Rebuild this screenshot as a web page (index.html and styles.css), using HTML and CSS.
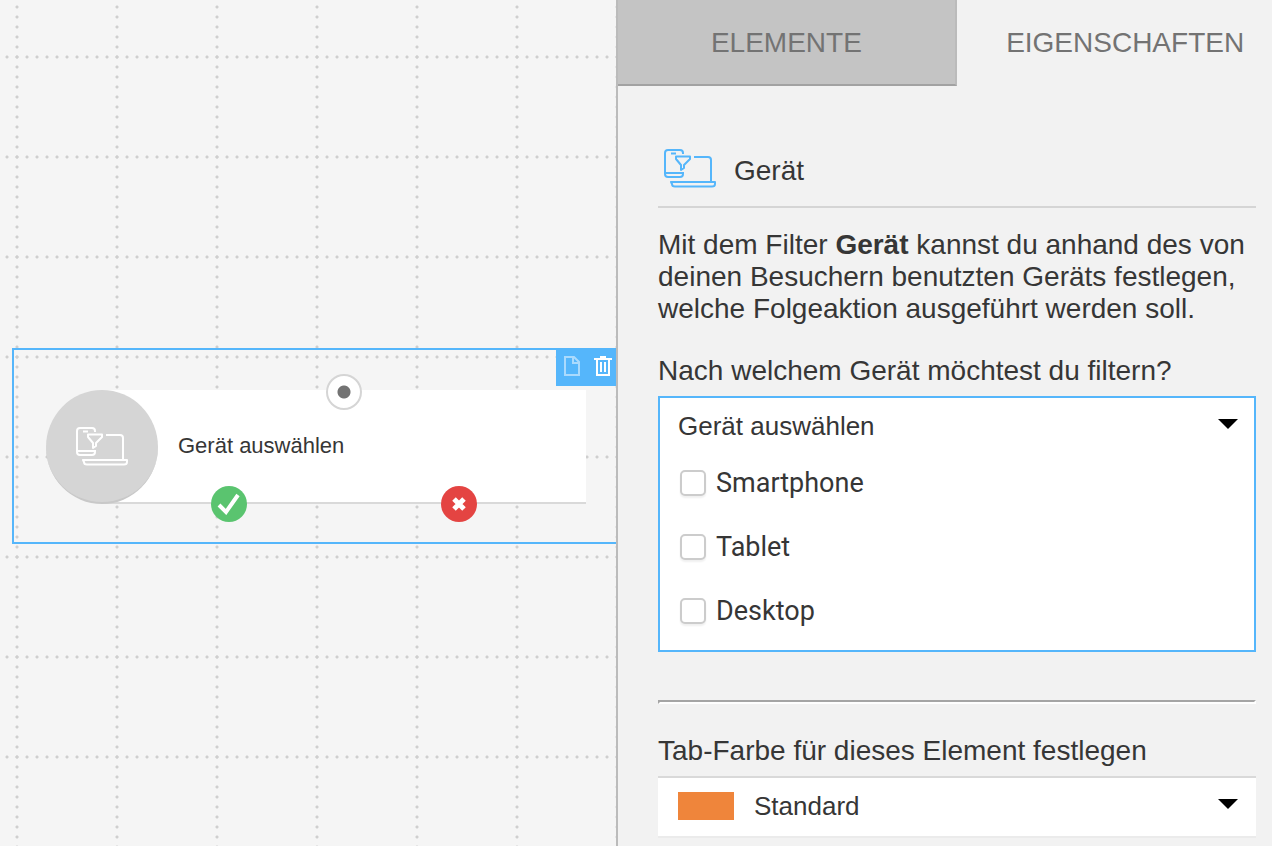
FILE: index.html
```
<!DOCTYPE html>
<html lang="de">
<head>
  <meta charset="utf-8">
  <title>Gerät</title>
  <link rel="stylesheet" href="styles.css">
</head>

<body>
  <svg class="defs" width="0" height="0">
    <symbol id="device" viewBox="0 0 52 40">
      <g fill="none" stroke="currentColor" stroke-width="2" stroke-linejoin="round">
        <path d="M19 6V5q0-3-3-3H4Q1 2 1 5v21q0 3 3 3h12q3 0 3-3v-2M7 5.500h5M1 25h18"/>
        <path d="M12 8.500h14v2.500l-6 6v3l-3 2v-5l-5-6z"/>
        <path d="M30 9h14q3 0 3 3v22M11 33v1M7 34h44v2q0 2.500-3 2.500H11q-3 0-3-2.500z"/>
      </g>
    </symbol>
  </svg>

  <div class="editor">
    <main class="canvas">
      <div class="selection">
        <div class="toolbar">
          <button class="tool faded" aria-label="Kopieren">
            <svg width="16" height="20" viewBox="0 0 16 20" fill="none" stroke="currentColor" stroke-width="2"><path d="M1 1h9l5 5v13H1zM9 1v6h6"/></svg>
          </button>
          <button class="tool" aria-label="Löschen">
            <svg width="18" height="20" viewBox="0 0 18 20" fill="none" stroke="currentColor" stroke-width="2"><path d="M0 3h18M6 1h6M3 3v16h12V3M7 6v10M11 6v10"/></svg>
          </button>
        </div>
        <div class="node">
          <div class="node-icon"><svg width="52" height="40"><use href="#device"/></svg></div>
          <div class="node-body">Gerät auswählen
            <span class="port port-in"></span>
            <span class="port port-yes">
              <svg width="24" height="22" viewBox="0 0 24 22" fill="none" stroke="#fff" stroke-width="4"><path d="M2 12l7 7L21 2"/></svg>
            </span>
            <span class="port port-no">
              <svg width="14" height="14" viewBox="0 0 14 14" fill="none" stroke="#fff" stroke-width="5"><path d="M2 2l10 10M12 2L2 12"/></svg>
            </span>
          </div>
        </div>
      </div>
    </main>

    <aside class="panel">
      <nav class="tabs">
        <button class="tab">ELEMENTE</button>
        <button class="tab active">EIGENSCHAFTEN</button>
      </nav>

      <div class="properties">
        <div class="title">
          <svg width="52" height="40"><use href="#device"/></svg>
          <span>Gerät</span>
        </div>
        <p>Mit dem Filter <b>Gerät</b> kannst du anhand des von deinen Besuchern benutzten Geräts festlegen, welche Folgeaktion ausgeführt werden soll.</p>

        <label class="caption" for="filter">Nach welchem Gerät möchtest du filtern?</label>
        <div class="dropdown">
          <div class="picker">
            <select id="filter"><option>Gerät auswählen</option></select>
          </div>
          <div class="options">
            <label><input type="checkbox">Smartphone</label>
            <label><input type="checkbox">Tablet</label>
            <label><input type="checkbox">Desktop</label>
          </div>
        </div>

        <hr>

        <label class="caption" for="color">Tab-Farbe für dieses Element festlegen</label>
        <div class="picker color-picker">
          <span class="swatch"></span>
          <select id="color"><option>Standard</option></select>
        </div>
      </div>
    </aside>
  </div>
</body>
</html>
```
FILE: styles.css
```
* {
    box-sizing: border-box;
}

body {
    margin: 0;
    font-family: "Liberation Sans", Arial, sans-serif;
    font-size: 28px;
    line-height: 32px;
    color: #363636;
    background-color: #f2f2f2;
}

button {
    padding: 0;
    border: none;
    font: inherit;
    cursor: pointer;
}

svg {
    display: block;
}

.defs {
    position: absolute;
}

.editor {
    display: flex;
    height: 100vh;
    overflow: hidden;
}

/* canvas */
.canvas {
    width: 48.43%;
    position: relative;
    overflow: hidden;
    background-color: #f5f5f5;
    background-image:
        radial-gradient(circle, #cfcfcf 1px, transparent 2px),
        radial-gradient(circle, #cfcfcf 1px, transparent 2px);
    background-size: 100px 10px, 10px 100px;
    background-position: -33px 2px, 2px 7px;
}

.selection {
    position: absolute;
    top: 348px;
    left: 12px;
    right: 0;
    padding: 40px 30px 38px 32px;
    border: 2px solid #55b6fb;
    border-right: none;
}

.toolbar {
    position: absolute;
    top: -2px;
    right: 0;
    display: flex;
    align-items: center;
    gap: 14px;
    height: 38px;
    padding: 0 4px 2px 8px;
    background-color: #55b6fb;
}

.tool {
    background: none;
    color: #fff;
}

.faded {
    opacity: 0.5;
}

.node {
    display: flex;
}

.node-icon {
    display: flex;
    align-items: center;
    justify-content: center;
    width: 112px;
    height: 114px;
    border-bottom: 2px solid #c8c8c8;
    border-radius: 50%;
    background-color: #d5d5d5;
    color: #fff;
    z-index: 1;
}

.node-body {
    position: relative;
    flex: 1;
    display: flex;
    align-items: center;
    margin-left: -56px;
    padding-left: 76px;
    font-size: 22px;
    background-color: #fff;
    border-bottom: 2px solid #d9d9d9;
}

.port {
    position: absolute;
    display: flex;
    align-items: center;
    justify-content: center;
    width: 36px;
    height: 36px;
    margin-left: -18px;
    border-radius: 50%;
    z-index: 2;
}

.port-in {
    top: -16px;
    left: 50%;
    border: 2px solid #d5d5d5;
    background: radial-gradient(circle, #737373 6px, #fff 7px);
}

.port-yes {
    bottom: -20px;
    left: 127px;
    background-color: #5ac46f;
}

.port-no {
    bottom: -20px;
    left: 357px;
    background-color: #e44442;
}

/* side panel */
.panel {
    flex: 1;
    min-width: 0;
    border-left: 2px solid #bbb;
    overflow: hidden;
}

.tabs {
    display: flex;
}

.tab {
    flex: 0 0 51.8%;
    height: 86px;
    padding-top: 2px;
    color: #737373;
    background-color: #c4c4c4;
    border-right: 2px solid #bbb;
    border-bottom: 2px solid #a2a2a2;
}

.tab.active {
    background: none;
    border-color: transparent;
}

.properties {
    padding: 60px 16px 8px 40px;
}

.title {
    display: flex;
    align-items: center;
    gap: 18px;
    height: 62px;
    padding: 0 6px 16px;
    border-bottom: 2px solid #d5d5d5;
}

.title svg {
    color: #55b6fb;
}

.title span {
    padding-top: 6px;
}

p {
    margin: 21px 0 30px;
}

.caption {
    display: block;
    margin-bottom: 9px;
}

.dropdown {
    background-color: #fff;
    border: 2px solid #55b6fb;
}

.picker {
    position: relative;
    display: flex;
    align-items: center;
    height: 56px;
    padding-left: 18px;
}

.picker::after {
    content: "";
    position: absolute;
    top: 21px;
    right: 16px;
    border: 10px solid transparent;
    border-top-color: #000;
    border-bottom: none;
    pointer-events: none;
}

select {
    flex: 1;
    height: 100%;
    padding: 0;
    border: none;
    appearance: none;
    background: none;
    font: inherit;
    font-size: 26px;
    color: inherit;
}

.options {
    display: flex;
    flex-direction: column;
    gap: 32px;
    padding: 13px 20px 23px;
    font-family: Roboto, sans-serif;
    font-size: 27px;
}

.options label {
    display: flex;
    align-items: center;
    gap: 10px;
}

.options input {
    appearance: none;
    width: 26px;
    height: 26px;
    margin: 0;
    border: 2px solid #ccc;
    border-radius: 5px;
    background-color: #fff;
    box-shadow: 0 2px 2px #f0f0f0;
}

.options input:checked {
    background-color: #55b6fb;
}

hr {
    margin: 48px 0 31px;
    border: 2px solid;
    border-color: #a5a5a5 #fff #fff #a5a5a5;
}

.color-picker {
    height: 62px;
    padding: 0 0 2px 20px;
    gap: 20px;
    background-color: #fff;
    border-top: 2px solid #d9d9d9;
    border-bottom: 2px solid #ebebeb;
}

.color-picker::after {
    right: 18px;
}

.swatch {
    width: 56px;
    height: 28px;
    background-color: #ef853b;
}
```
